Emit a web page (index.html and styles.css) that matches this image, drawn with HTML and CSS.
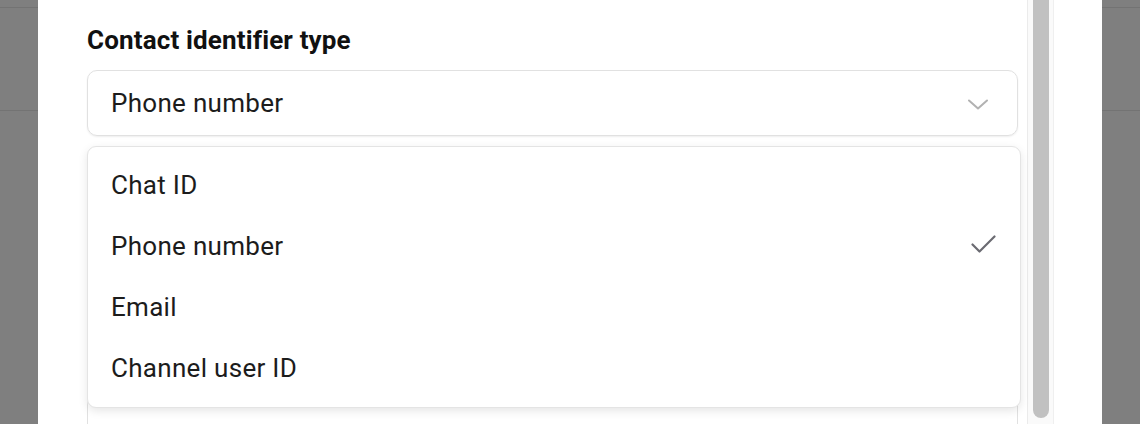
FILE: index.html
```html
<!DOCTYPE html>
<html lang="en">
<head>
<meta charset="utf-8">
<title>Contact identifier type</title>
<link rel="stylesheet" href="styles.css">
</head>
<body>
<div class="backdrop">
  <div class="gutter"></div>
  <div class="modal">
    <div class="modal-body">
      <div class="field">
        <div class="field-label">Contact identifier type</div>
        <div class="select">
          <span class="select-value">Phone number</span>
          <svg class="chevron" width="20" height="11" viewBox="0 0 20 11"><polyline points="1,1.5 10,9.5 19,1.5" fill="none" stroke="#b2b2b2" stroke-width="2" stroke-linecap="round" stroke-linejoin="round"/></svg>
        </div>
        <ul class="menu">
          <li class="menu-item">Chat ID</li>
          <li class="menu-item selected">Phone number
            <svg class="check" width="25" height="19" viewBox="0 0 25 19"><polyline points="1.5,9.5 8.5,16.5 23.5,1.5" fill="none" stroke="#6b6b72" stroke-width="2.2" stroke-linecap="round" stroke-linejoin="round"/></svg>
          </li>
          <li class="menu-item">Email</li>
          <li class="menu-item">Channel user ID</li>
        </ul>
      </div>
      <div class="next-field"></div>
    </div>
    <div class="scrollbar"><div class="thumb"></div></div>
    <div class="modal-edge"></div>
  </div>
  <div class="gutter"></div>
</div>
</body>
</html>
```
FILE: styles.css
```css
* { box-sizing: border-box; }
html, body { margin: 0; padding: 0; }
body {
  width: 1140px;
  height: 424px;
  overflow: hidden;
  font-family: Roboto, "Liberation Sans", Arial, sans-serif;
  color: #1c1c1c;
  background:
    linear-gradient(#737373, #737373) 0 7px / 100% 1px no-repeat,
    linear-gradient(#737373, #737373) 0 110px / 100% 1px no-repeat,
    #7f7f7f;
}
.backdrop {
  display: flex;
  height: 424px;
}
.gutter { width: 38px; flex: none; }
.modal {
  width: 1064px;
  flex: none;
  background: #fff;
  display: flex;
  overflow: hidden;
}
.modal-body {
  flex: 1;
  padding: 25px 0 0 49px;
}
.field { position: relative; }
.field-label {
  font-size: 26px;
  font-weight: 700;
  line-height: 30px;
  color: #111;
  letter-spacing: 0.15px;
}
.select {
  margin-top: 15px;
  height: 66px;
  border: 1px solid #e1e1e1;
  border-radius: 10px;
  box-shadow: 0 1px 2px rgba(0,0,0,0.07);
  display: flex;
  align-items: center;
  justify-content: space-between;
  padding: 0 29px 0 23px;
}
.select-value { font-size: 26px; line-height: 30px; letter-spacing: 0.3px; }
.chevron { display: block; margin-top: 2px; }
.menu {
  position: absolute;
  top: 121px;
  left: 0;
  width: 934px;
  margin: 0;
  padding: 7px 0 9px;
  list-style: none;
  background: #fff;
  border: 1px solid #e4e4e4;
  border-radius: 9px;
  box-shadow: 0 3px 10px rgba(0,0,0,0.10);
  z-index: 2;
}
.menu-item {
  height: 61px;
  display: flex;
  align-items: center;
  justify-content: space-between;
  padding: 0 24px 0 23px;
  font-size: 26px;
  line-height: 30px;
  letter-spacing: 0.3px;
}
.check { display: block; margin-top: -3px; }
.next-field {
  margin-top: 259px;
  height: 40px;
  border: 1px solid #e1e1e1;
  border-radius: 10px;
}
.scrollbar {
  width: 27px;
  flex: none;
  margin-left: 9px;
  background: #fafafa;
  border-left: 1px solid #ebebeb;
  border-right: 1px solid #efefef;
  display: flex;
  flex-direction: column;
}
.thumb {
  flex: none;
  margin: -20px 4px 0 5px;
  height: 438px;
  background: #c1c1c1;
  border-radius: 8px;
}
.modal-edge { width: 48px; flex: none; }
```
